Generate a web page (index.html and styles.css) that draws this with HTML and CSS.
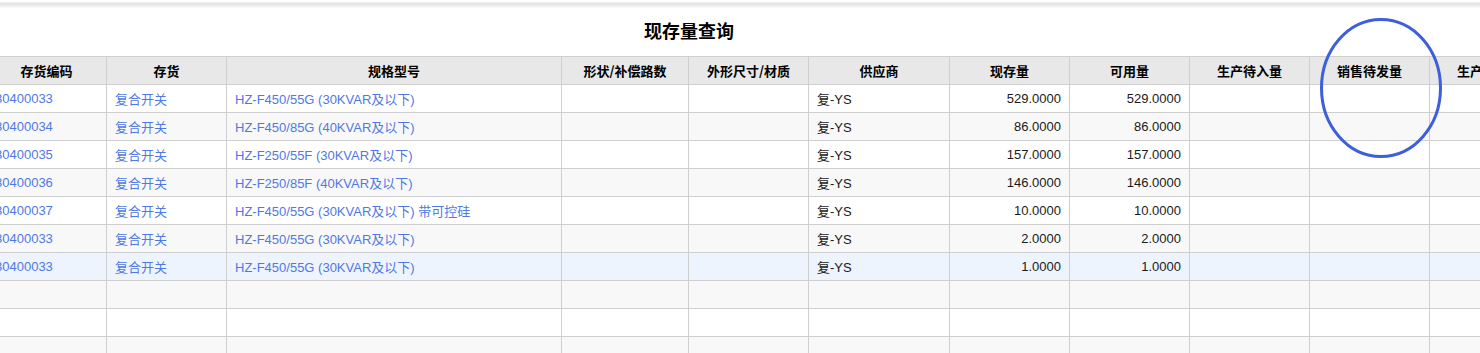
FILE: index.html
```html
<!DOCTYPE html>
<html lang="zh-CN">
<head>
<meta charset="utf-8">
<title>现存量查询</title>
<link rel="stylesheet" href="styles.css">
</head>
<body>
<div class="page">
  <div class="topbar"></div>
  <h1 class="title">现存量查询</h1>
  <div class="grid-wrap">
    <table class="grid">
      <colgroup>
        <col class="w120"><col class="w120"><col class="w335"><col class="w127"><col class="w120"><col class="w141"><col class="w120"><col class="w120"><col class="w120"><col class="w120"><col class="w120">
      </colgroup>
      <thead>
        <tr><th>存货编码</th><th>存货</th><th>规格型号</th><th>形状/补偿路数</th><th>外形尺寸/材质</th><th>供应商</th><th>现存量</th><th>可用量</th><th>生产待入量</th><th>销售待发量</th><th>生产待出量</th></tr>
      </thead>
      <tbody>
        <tr><td class="link">30400033</td><td class="link">复合开关</td><td class="link">HZ-F450/55G (30KVAR及以下)</td><td></td><td></td><td>复-YS</td><td class="num">529.0000</td><td class="num">529.0000</td><td></td><td></td><td></td></tr>
        <tr><td class="link">30400034</td><td class="link">复合开关</td><td class="link">HZ-F450/85G (40KVAR及以下)</td><td></td><td></td><td>复-YS</td><td class="num">86.0000</td><td class="num">86.0000</td><td></td><td></td><td></td></tr>
        <tr><td class="link">30400035</td><td class="link">复合开关</td><td class="link">HZ-F250/55F (30KVAR及以下)</td><td></td><td></td><td>复-YS</td><td class="num">157.0000</td><td class="num">157.0000</td><td></td><td></td><td></td></tr>
        <tr><td class="link">30400036</td><td class="link">复合开关</td><td class="link">HZ-F250/85F (40KVAR及以下)</td><td></td><td></td><td>复-YS</td><td class="num">146.0000</td><td class="num">146.0000</td><td></td><td></td><td></td></tr>
        <tr><td class="link">30400037</td><td class="link">复合开关</td><td class="link">HZ-F450/55G (30KVAR及以下) 带可控硅</td><td></td><td></td><td>复-YS</td><td class="num">10.0000</td><td class="num">10.0000</td><td></td><td></td><td></td></tr>
        <tr><td class="link">30400033</td><td class="link">复合开关</td><td class="link">HZ-F450/55G (30KVAR及以下)</td><td></td><td></td><td>复-YS</td><td class="num">2.0000</td><td class="num">2.0000</td><td></td><td></td><td></td></tr>
        <tr class="selected"><td class="link">30400033</td><td class="link">复合开关</td><td class="link">HZ-F450/55G (30KVAR及以下)</td><td></td><td></td><td>复-YS</td><td class="num">1.0000</td><td class="num">1.0000</td><td></td><td></td><td></td></tr>
        <tr><td></td><td></td><td></td><td></td><td></td><td></td><td></td><td></td><td></td><td></td><td></td></tr>
        <tr><td></td><td></td><td></td><td></td><td></td><td></td><td></td><td></td><td></td><td></td><td></td></tr>
        <tr><td></td><td></td><td></td><td></td><td></td><td></td><td></td><td></td><td></td><td></td><td></td></tr>
      </tbody>
    </table>
  </div>
  <svg class="mark" width="130" height="146" viewBox="0 0 130 146" aria-hidden="true">
    <ellipse cx="65" cy="73" rx="59.5" ry="68.5" fill="none" stroke="#3d5fd9" stroke-width="3"/>
  </svg>
</div>
</body>
</html>
```

FILE: styles.css
```css
html, body {
  margin: 0;
  padding: 0;
  background: #fff;
  overflow: hidden;
}

.page {
  position: relative;
  width: 1480px;
  height: 353px;
  overflow: hidden;
  font-family: "Liberation Sans", "Noto Sans CJK SC", sans-serif;
  font-size: 13px;
  color: #1a1a1a;
}

.topbar {
  height: 8px;
  background: linear-gradient(to bottom, #fff 0, #fff 2px, #e2e2e2 3px, #e8e8e8 5px, #f6f6f6 7px, #fff 8px);
}

.title {
  margin: 0;
  height: 48px;
  line-height: 44px;
  padding-right: 102px;
  text-align: center;
  font-family: "Noto Sans CJK SC", "Liberation Sans", sans-serif;
  font-size: 18px;
  font-weight: bold;
  color: #000;
}

.grid-wrap {
  margin-left: -14px;
}

.grid {
  table-layout: fixed;
  border-collapse: collapse;
  width: 1563px;
}

.w120 { width: 120px; }
.w127 { width: 127px; }
.w141 { width: 141px; }
.w335 { width: 335px; }

.grid th,
.grid td {
  height: 28px;
  padding: 0 8px;
  border: 1px solid #cfcfcf;
  white-space: nowrap;
  overflow: hidden;
  box-sizing: border-box;
}

.grid th {
  background: #e8e8e8;
  font-family: "Noto Sans CJK SC", "Liberation Sans", sans-serif;
  font-weight: bold;
  font-size: 13px;
  color: #000;
  text-align: center;
}

.grid td {
  text-align: left;
}

.grid tbody tr:nth-child(even) {
  background: #f8f8f8;
}

.grid tbody tr.selected {
  background: #edf4fe;
}

.grid td.link {
  color: #5078e4;
}

.grid td.num {
  text-align: right;
}

.mark {
  position: absolute;
  left: 1316px;
  top: 15px;
}
```
